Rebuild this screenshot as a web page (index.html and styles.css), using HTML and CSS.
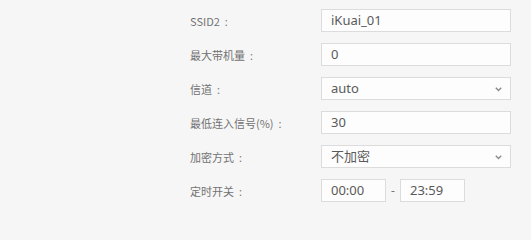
FILE: index.html
```html
<!DOCTYPE html>
<html lang="zh-CN">
<head>
<meta charset="utf-8">
<title>无线设置</title>
<link rel="stylesheet" href="styles.css">
</head>
<body>
<form class="form">
  <div class="row">
    <label class="label">SSID2<span class="colon">:</span></label>
    <div class="field">iKuai_01</div>
  </div>
  <div class="row">
    <label class="label">最大带机量<span class="colon">:</span></label>
    <div class="field">0</div>
  </div>
  <div class="row">
    <label class="label">信道<span class="colon">:</span></label>
    <div class="field select">auto
      <svg class="chev" width="7" height="5" viewBox="0 0 7 5"><path d="M0.8 0.8 L3.5 3.6 L6.2 0.8" fill="none" stroke="#8a8a8a" stroke-width="1.4"/></svg>
    </div>
  </div>
  <div class="row">
    <label class="label">最低连入信号(%)<span class="colon">:</span></label>
    <div class="field">30</div>
  </div>
  <div class="row">
    <label class="label">加密方式<span class="colon">:</span></label>
    <div class="field select">不加密
      <svg class="chev" width="7" height="5" viewBox="0 0 7 5"><path d="M0.8 0.8 L3.5 3.6 L6.2 0.8" fill="none" stroke="#8a8a8a" stroke-width="1.4"/></svg>
    </div>
  </div>
  <div class="row">
    <label class="label">定时开关<span class="colon">:</span></label>
    <div class="time-group">
      <div class="field time">00:00</div>
      <span class="dash">-</span>
      <div class="field time">23:59</div>
    </div>
  </div>
</form>
</body>
</html>
```
FILE: styles.css
```css
html, body {
  margin: 0;
  padding: 0;
  background: #f6f6f6;
  width: 531px;
  height: 218px;
  overflow: hidden;
}

.form {
  display: flex;
  flex-direction: column;
  gap: 11px;
  padding: 9px 0 0 190px;
  font-family: "Noto Sans", "Noto Sans CJK SC", sans-serif;
}

.row {
  display: flex;
  align-items: center;
  height: 23px;
}

.label {
  width: 131px;
  flex: none;
  font-size: 11px;
  color: #727272;
  font-family: "Noto Sans CJK SC", "Noto Sans", sans-serif;
  white-space: nowrap;
}

.colon {
  margin-left: 5px;
  font-family: "Noto Sans", sans-serif;
}

.field {
  position: relative;
  box-sizing: border-box;
  width: 190px;
  height: 23px;
  border: 1px solid #dcdcdc;
  background: #fdfdfd;
  padding-left: 9px;
  font-size: 13px;
  line-height: 21px;
  color: #5a5a5a;
  font-family: "Noto Sans", "Noto Sans CJK SC", sans-serif;
}

.chev {
  position: absolute;
  right: 8px;
  top: 9px;
}

.time-group {
  display: flex;
  align-items: center;
}

.field.time {
  width: 65px;
}

.dash {
  width: 14px;
  text-align: center;
  font-size: 12px;
  color: #777;
}
```
